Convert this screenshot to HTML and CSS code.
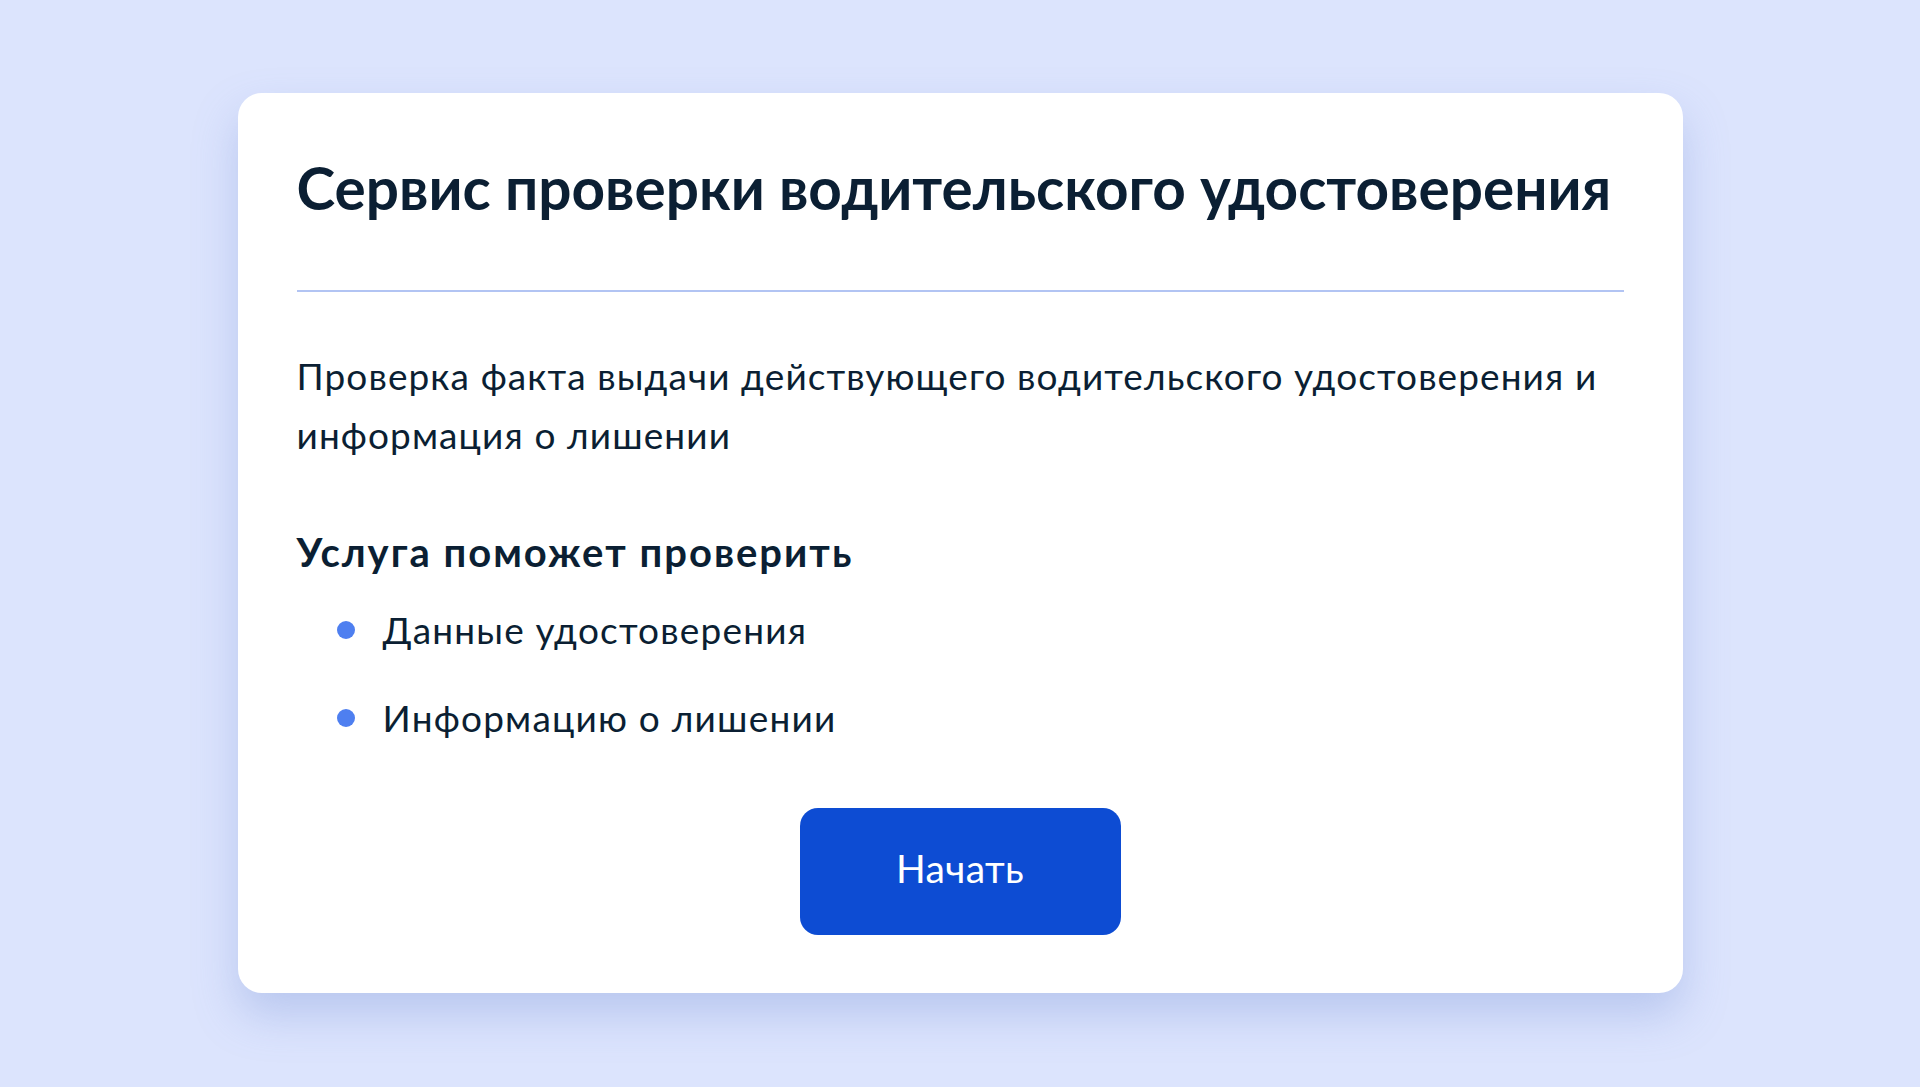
FILE: index.html
```html
<!DOCTYPE html>
<html lang="ru">
<head>
<meta charset="utf-8">
<title>Сервис проверки водительского удостоверения</title>
<link rel="stylesheet" href="styles.css">
</head>
<body>
<main class="page">
  <section class="card">
    <h1 class="title">Сервис проверки водительского удостоверения</h1>
    <hr class="divider">
    <p class="lead">Проверка факта выдачи действующего водительского удостоверения и информация о лишении</p>
    <h2 class="subtitle">Услуга поможет проверить</h2>
    <ul class="list">
      <li class="list-item"><span class="dot"></span><span>Данные удостоверения</span></li>
      <li class="list-item"><span class="dot"></span><span>Информацию о лишении</span></li>
    </ul>
    <div class="actions">
      <button class="btn" type="button">Начать</button>
    </div>
  </section>
</main>
</body>
</html>
```

FILE: styles.css
```css
html, body {
  margin: 0;
  padding: 0;
}
body {
  background: #dce4fd;
  font-family: Lato, "Noto Sans", sans-serif;
  color: #0b1f33;
  min-height: 1087px;
}
.page {
  display: flex;
  justify-content: center;
  padding-top: 93px;
}
.card {
  width: 1445px;
  box-sizing: border-box;
  background: #ffffff;
  border-radius: 24px;
  padding: 58px 59px 58px 59px;
  box-shadow: 0 22px 44px rgba(120, 145, 215, 0.35);
}
.title {
  margin: 0;
  font-size: 58.5px;
  font-weight: 700;
  line-height: 72px;
  letter-spacing: 0;
}
.divider {
  border: 0;
  height: 2px;
  background: #b2c4f3;
  margin: 67px 0 0 0;
}
.lead {
  margin: 54px 0 0 0;
  font-size: 37px;
  line-height: 59px;
  letter-spacing: 1.1px;
}
.subtitle {
  margin: 64px 0 0 0;
  font-size: 40px;
  font-weight: 700;
  line-height: 48px;
  letter-spacing: 2px;
}
.list {
  list-style: none;
  margin: 25px 0 0 0;
  padding: 0 0 0 40px;
  display: flex;
  flex-direction: column;
  gap: 30px;
}
.list-item {
  display: flex;
  align-items: center;
  font-size: 37px;
  line-height: 58px;
  letter-spacing: 1.2px;
}
.dot {
  width: 18px;
  height: 18px;
  border-radius: 50%;
  background: #4e7ff0;
  margin-right: 28px;
  margin-top: 0;
  flex: none;
}
.actions {
  display: flex;
  justify-content: center;
  margin-top: 61px;
}
.btn {
  width: 321px;
  height: 127px;
  padding: 0 0 7px 0;
  border: 0;
  border-radius: 18px;
  background: #0d4cd3;
  color: #ffffff;
  font-family: Lato, "Noto Sans", sans-serif;
  font-size: 39px;
  font-weight: 400;
  letter-spacing: 0.3px;
  cursor: pointer;
}
```
